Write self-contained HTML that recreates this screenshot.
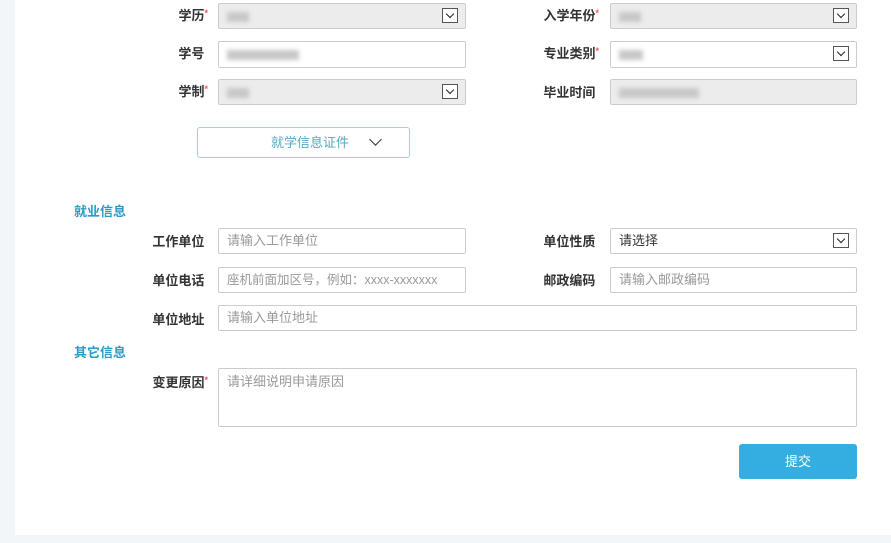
<!DOCTYPE html>
<html><head><meta charset="utf-8"><style>
body{margin:0;width:891px;height:543px;background:#fff;position:relative;overflow:hidden;font-family:"Liberation Sans","Noto Sans CJK SC",sans-serif;}
.ls{position:absolute;left:0;top:0;width:15px;height:543px;background:#f2f6f9;}
.bs{position:absolute;left:0;top:535px;width:891px;height:8px;background:#f2f6f9;}
.lab{position:absolute;font-size:13px;font-weight:bold;color:#333;text-align:right;width:122px;line-height:26px;}
.lab i{color:#e55;font-style:normal;font-size:9px;vertical-align:top;position:relative;top:-3px;}
.f{position:absolute;box-sizing:border-box;border:1px solid #ccc;border-radius:2px;background:#fff;font-size:13px;color:#999;line-height:24px;padding-left:8px;}
.g{background:#ececec;}
.blur{display:inline-block;height:10px;background:#c8c8c8;filter:blur(2px);vertical-align:middle;}
.arr{position:absolute;right:7px;top:4px;width:16px;height:15px;box-sizing:border-box;border:1px solid #555;background:#fff;}
.arr:after{content:"";position:absolute;left:4px;top:2px;width:5px;height:5px;border-right:1.5px solid #222;border-bottom:1.5px solid #222;transform:rotate(45deg);}
.sec{position:absolute;left:74px;font-size:13px;font-weight:bold;color:#2a9bc6;}
</style></head><body>
<div class="ls"></div><div class="bs"></div>

<div class="lab" style="left:86px;top:3px">学历<i>*</i></div>
<div class="f g" style="left:218px;top:3px;width:248px;height:26px"><span class="blur" style="width:22px"></span><div class="arr"></div></div>
<div class="lab" style="left:477px;top:3px">入学年份<i>*</i></div>
<div class="f g" style="left:610px;top:3px;width:247px;height:26px"><span class="blur" style="width:22px"></span><div class="arr"></div></div>

<div class="lab" style="left:86px;top:41px">学号&nbsp;</div>
<div class="f" style="left:218px;top:41px;width:248px;height:27px"><span class="blur" style="width:72px"></span></div>
<div class="lab" style="left:477px;top:41px">专业类别<i>*</i></div>
<div class="f" style="left:610px;top:41px;width:247px;height:27px"><span class="blur" style="width:24px"></span><div class="arr"></div></div>

<div class="lab" style="left:86px;top:79px">学制<i>*</i></div>
<div class="f g" style="left:218px;top:79px;width:248px;height:26px"><span class="blur" style="width:22px"></span><div class="arr"></div></div>
<div class="lab" style="left:477px;top:80px">毕业时间&nbsp;</div>
<div class="f g" style="left:610px;top:79px;width:247px;height:26px"><span class="blur" style="width:80px"></span></div>

<div style="position:absolute;left:197px;top:127px;width:213px;height:31px;box-sizing:border-box;border:1px solid #9fd2df;border-radius:3px;font-size:13px;color:#55a9c3;line-height:29px;">
<span style="position:absolute;left:73px">就学信息证件</span>
<span style="position:absolute;left:173px;top:7px;width:8px;height:8px;border-right:1.2px solid #333;border-bottom:1.2px solid #333;transform:rotate(45deg);"></span></div>

<div class="sec" style="top:201px">就业信息</div>
<div class="lab" style="left:86px;top:229px">工作单位&nbsp;</div>
<div class="f" style="left:218px;top:228px;width:248px;height:26px">请输入工作单位</div>
<div class="lab" style="left:477px;top:229px">单位性质&nbsp;</div>
<div class="f" style="left:610px;top:228px;width:247px;height:26px;color:#333">请选择<div class="arr"></div></div>

<div class="lab" style="left:86px;top:268px">单位电话&nbsp;</div>
<div class="f" style="left:218px;top:267px;width:248px;height:26px;font-size:12.5px">座机前面加区号，例如：xxxx-xxxxxxx</div>
<div class="lab" style="left:477px;top:268px">邮政编码&nbsp;</div>
<div class="f" style="left:610px;top:267px;width:247px;height:26px">请输入邮政编码</div>

<div class="lab" style="left:86px;top:307px">单位地址&nbsp;</div>
<div class="f" style="left:218px;top:305px;width:639px;height:26px">请输入单位地址</div>

<div class="sec" style="top:342px">其它信息</div>
<div class="lab" style="left:86px;top:370px;line-height:26px">变更原因<i>*</i></div>
<div class="f" style="left:218px;top:368px;width:639px;height:59px;line-height:26px">请详细说明申请原因</div>

<div style="position:absolute;left:739px;top:444px;width:118px;height:35px;background:#34aee1;border-radius:3px;color:#fff;font-size:13px;text-align:center;line-height:35px;">提交</div>
</body></html>
